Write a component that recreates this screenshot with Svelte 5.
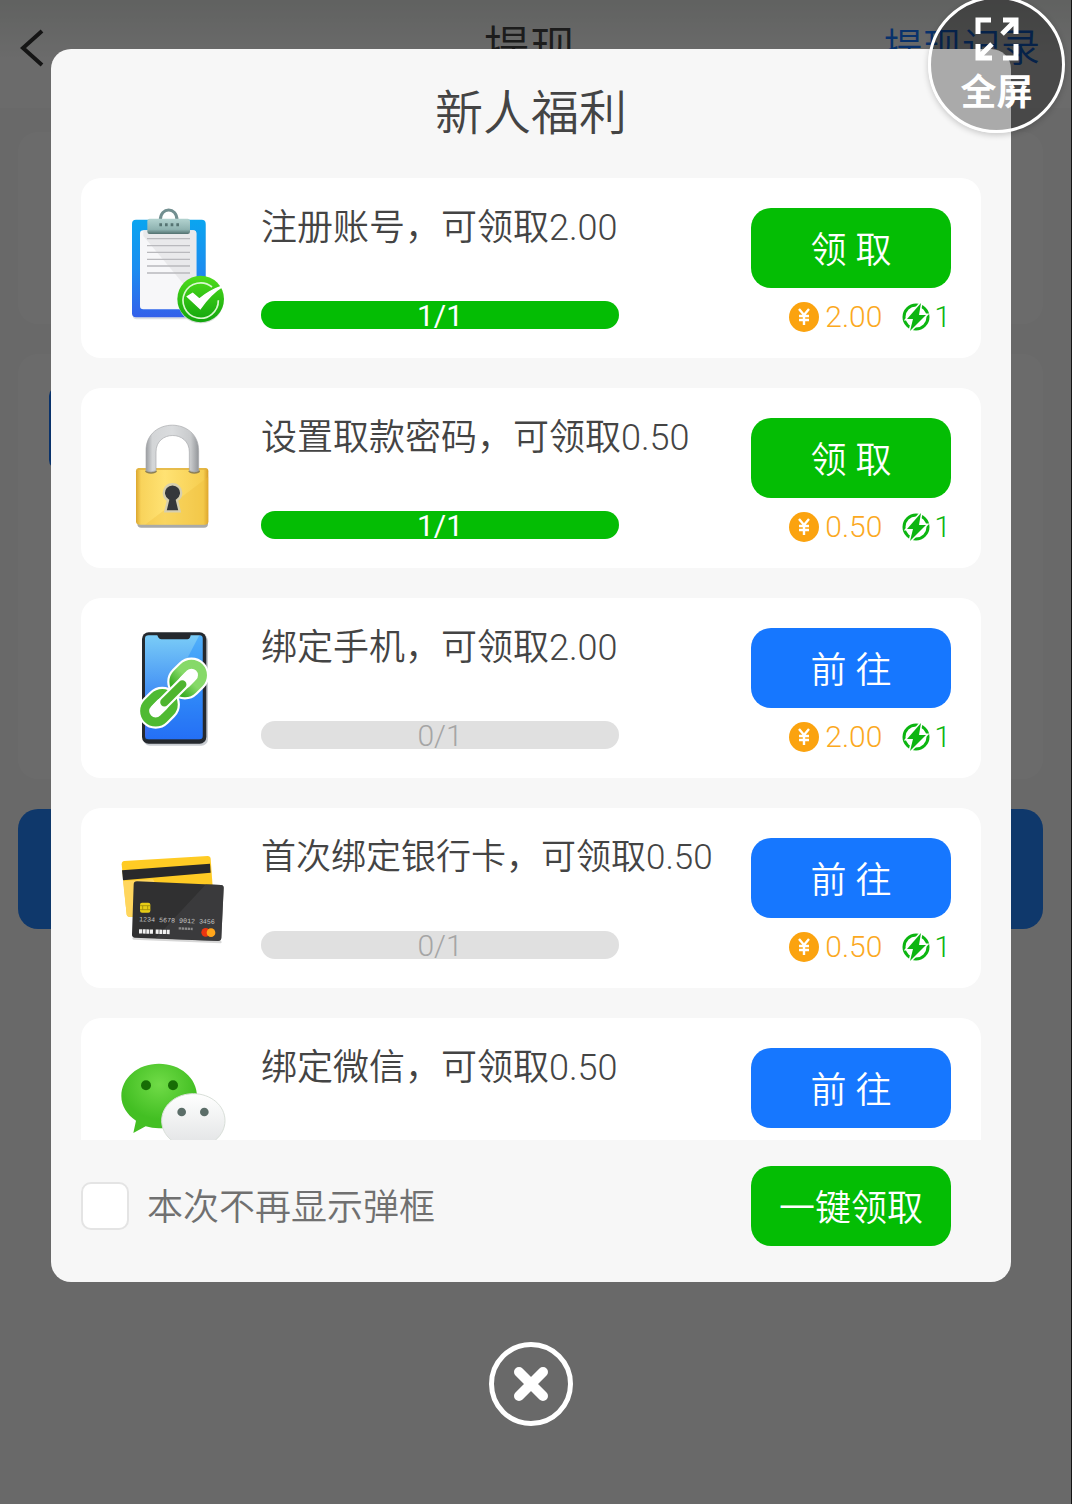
<script>
    const tasks = [
        {icon: 'clipboard', title: '注册账号，可领取', done: 1, money: '2.00'},
        {icon: 'lock', title: '设置取款密码，可领取', done: 1, money: '0.50'},
        {icon: 'phone', title: '绑定手机，可领取', done: 0, money: '2.00'},
        {icon: 'cards', title: '首次绑定银行卡，可领取', done: 0, money: '0.50'},
        {icon: 'wechat', title: '绑定微信，可领取', done: 0, money: '0.50'}
    ];

    let open = true;
    let hideNext = false;
</script>

<div class="app">
    <div class="page" inert={open}>
        <header class="nav">
            <button class="back" aria-label="返回">
                <svg viewBox="0 0 24 38"><path d="M22 2 3 19l19 17"/></svg>
            </button>
            <h1>提现</h1>
            <a href="#records">提现记录</a>
        </header>
        <section class="panel account"></section>
        <section class="panel amount"><div class="choice"></div></section>
        <button class="submit" aria-label="提现"></button>
    </div>

    {#if open}
        <div class="overlay">
            <div class="modal" role="dialog" aria-labelledby="modal-title">
                <h2 id="modal-title">新人福利</h2>

                <ul class="tasks">
                    {#each tasks as task}
                        <li>
                            {#if task.icon === 'clipboard'}
                                <svg class="pic" viewBox="93 84 360 360">
                                    <defs>
                                        <linearGradient id="board" x2="0" y2="1"><stop stop-color="#0aa5f0"/><stop offset=".5" stop-color="#1b8df0"/><stop offset="1" stop-color="#3460ea"/></linearGradient>
                                        <linearGradient id="clip" x2="0" y2="1"><stop stop-color="#b3d3d0"/><stop offset=".7" stop-color="#8fb3b1"/><stop offset="1" stop-color="#52706f"/></linearGradient>
                                        <linearGradient id="tick" x2="0" y2="1"><stop stop-color="#4fdc1c"/><stop offset="1" stop-color="#11a50d"/></linearGradient>
                                    </defs>
                                    <rect x="158" y="126" width="220" height="292" rx="12" fill="#dde0e4"/>
                                    <rect x="156" y="119" width="221" height="293" rx="12" fill="url(#board)"/>
                                    <rect x="180" y="151" width="169" height="237" rx="10" fill="#f7f7f9"/>
                                    <path d="M190 151h149q10 0 10 10v184l-34-28L190 168z" fill="#e9e9eb"/>
                                    <path d="M201 176h129M201 197h129M201 217h129M201 238h129M201 258h129M201 279h129" stroke="#b9b9bd" stroke-width="4"/>
                                    <path d="M241 120c0-40 50-40 50 0" fill="none" stroke="#728f90" stroke-width="9"/>
                                    <rect x="202" y="116" width="128" height="46" rx="7" fill="url(#clip)"/>
                                    <path d="M238 134h60" stroke="#557372" stroke-width="9" stroke-dasharray="8 9"/>
                                    <ellipse cx="362" cy="364" rx="68" ry="66" fill="#d4dcd4"/>
                                    <circle cx="362" cy="357" r="70" fill="url(#tick)"/>
                                    <path d="M396 321a53 53 0 1 0 19 40" fill="none" stroke="#d9f8ce" stroke-width="5"/>
                                    <path d="m322 350 16-10 20 17q30-26 74-41-42 26-71 70z" fill="#fff" stroke="#fff" stroke-width="4"/>
                                </svg>
                            {:else if task.icon === 'lock'}
                                <svg class="pic" viewBox="93 84 360 360">
                                    <defs>
                                        <linearGradient id="steel"><stop stop-color="#9a9da1"/><stop offset=".12" stop-color="#d3d5d7"/><stop offset=".5" stop-color="#dadcde"/><stop offset=".85" stop-color="#c8cacc"/><stop offset="1" stop-color="#929599"/></linearGradient>
                                        <linearGradient id="gold"><stop stop-color="#dca72f"/><stop offset=".07" stop-color="#f8d35b"/><stop offset=".4" stop-color="#ffe273"/><stop offset=".93" stop-color="#f6ce50"/><stop offset="1" stop-color="#d79c26"/></linearGradient>
                                    </defs>
                                    <rect x="172" y="365" width="212" height="48" rx="12" fill="#a9aaa8"/>
                                    <rect x="168" y="234" width="217" height="170" rx="10" fill="url(#gold)"/>
                                    <path d="M195 404 385 260v134q0 10-10 10z" fill="#eebe3c" opacity=".35"/>
                                    <path d="M174 237h205" stroke="#dfb040" stroke-width="4"/>
                                    <ellipse cx="213" cy="244" rx="17" ry="7" fill="#8e8054"/>
                                    <ellipse cx="343" cy="244" rx="17" ry="7" fill="#8e8054"/>
                                    <path d="M198 242v-60c0-102 158-102 158 0v60q-13 8-28 0v-56c0-66-100-66-100 0v56q-15 8-30 0z" fill="url(#steel)" stroke="#a6a8ab" stroke-width="2"/>
                                    <path d="M256 364 264 331a26 26 0 1 1 27 0l8 33z" fill="#35373b" stroke="#d7cfae" stroke-width="7"/>
                                </svg>
                            {:else if task.icon === 'phone'}
                                <svg class="pic" viewBox="93 84 360 360">
                                    <defs>
                                        <linearGradient id="screen" x2="0" y2="1"><stop stop-color="#7accf7"/><stop offset=".5" stop-color="#4795f5"/><stop offset="1" stop-color="#3468f0"/></linearGradient>
                                        <linearGradient id="link" x2="1" y2="0"><stop stop-color="#3aad25"/><stop offset=".5" stop-color="#86d968"/></linearGradient>
                                    </defs>
                                    <rect x="190" y="103" width="194" height="334" rx="20" fill="#c9cdd2"/>
                                    <rect x="186" y="97" width="193" height="334" rx="20" fill="#25292e"/>
                                    <path d="M206 106h26q4 12 12 12h78q8 0 10-12h26q10 0 10 10v292q0 10-10 10H206q-11 0-11-10V116q0-10 11-10z" fill="url(#screen)"/>
                                    <path d="M358 106q10 0 10 10v292q0 10-10 10H195z" fill="#087fff" opacity=".35"/>
                                    <g fill="#fff" transform="rotate(-45 280 280)">
                                        <g stroke="#fff" stroke-width="40">
                                            <rect x="172" y="247" width="94" height="66" rx="33"/>
                                            <rect x="296" y="247" width="94" height="66" rx="33"/>
                                        </g>
                                        <rect x="172" y="247" width="94" height="66" rx="33" stroke="#4fba32" stroke-width="27"/>
                                        <rect x="296" y="247" width="94" height="66" rx="33" stroke="url(#link)" stroke-width="27"/>
                                        <path d="M214 280h134" stroke="#fff" stroke-width="38" stroke-linecap="round"/>
                                        <path d="M242 280h76" stroke="#4eb52f" stroke-width="25" stroke-linecap="round"/>
                                    </g>
                                </svg>
                            {:else if task.icon === 'cards'}
                                <svg class="pic" viewBox="93 54 360 360">
                                    <path d="m133 123 250-15q8 0 9 8l11 155-252 20q-10 0-11-8L125 133q0-9 8-10z" fill="#ffcb24"/>
                                    <path d="m129 183 90-5 60 105-128 8q-10 0-11-8z" fill="#ffd65e"/>
                                    <path d="m126 151 264-20 2 27-263 23z" fill="#29292a"/>
                                    <path d="m161 355 260 11" stroke="#d7d7d7" stroke-width="8" stroke-linecap="round"/>
                                    <path d="m171 184 252 11q9 1 8 10l-7 149q-1 9-10 9l-250-10q-9-1-8-10l5-149q0-10 10-10z" fill="#303031"/>
                                    <path d="m378 193 45 2q9 1 8 10l-7 149q-1 9-10 9l-187-8z" fill="#414142" opacity=".65"/>
                                    <rect x="180" y="248" width="31" height="30" rx="6" fill="#e6cc17"/>
                                    <path d="M180 257h8v12h-8M211 257h-8v12h8M188 257h15M188 269h15" fill="none" stroke="#8b7b0b" stroke-width="2"/>
                                    <text x="177" y="304" class="digits" transform="rotate(2 177 304)">1234 5678 9012 3456</text>
                                    <path d="m177 334 42 1m8 0 44 1" stroke="#f1f1f1" stroke-width="13" stroke-dasharray="9 2"/>
                                    <path d="m296 325 42 2" stroke="#8c8c8c" stroke-width="7" stroke-dasharray="7 2"/>
                                    <circle cx="377" cy="337" r="13" fill="#eb3510"/>
                                    <circle cx="393" cy="338" r="13" fill="#ffa51a"/>
                                </svg>
                            {:else}
                                <svg class="pic" viewBox="93 84 360 360">
                                    <defs>
                                        <radialGradient id="green" cx=".5" cy=".3"><stop stop-color="#70db47"/><stop offset="1" stop-color="#43bf23"/></radialGradient>
                                        <linearGradient id="pale" x2="0" y2="1"><stop stop-color="#fff"/><stop offset="1" stop-color="#e1e3e4"/></linearGradient>
                                    </defs>
                                    <path d="M237 131c64 0 114 43 114 97s-50 97-114 97q-21 0-40-6l-37 20 8-37c-27-18-44-44-44-74 0-54 49-97 113-97z" fill="url(#green)"/>
                                    <circle cx="198" cy="196" r="15" fill="#176d05"/>
                                    <circle cx="279" cy="196" r="15" fill="#176d05"/>
                                    <path d="M340 221c53 0 95 36 95 81s-42 81-95 81-95-36-95-81 42-81 95-81z" fill="url(#pale)" stroke="#d9dfd9" stroke-width="3"/>
                                    <circle cx="305" cy="276" r="13" fill="#5b6d68"/>
                                    <circle cx="373" cy="276" r="13" fill="#5b6d68"/>
                                </svg>
                            {/if}

                            <div class="info">
                                <h3 class:long={task.title.length > 10}>{task.title}{task.money}</h3>
                                <div class="bar" class:full={task.done}
                                     role="progressbar" aria-label={task.title}
                                     aria-valuenow={task.done} aria-valuemin="0" aria-valuemax="1">
                                    {task.done}/1
                                </div>
                            </div>

                            <div class="side">
                                <button class="btn" class:green={task.done}>{task.done ? '领 取' : '前 往'}</button>
                                <div class="reward">
                                    <svg class="coin" viewBox="0 0 30 30">
                                        <circle cx="15" cy="15" r="15" fill="#fba30f"/>
                                        <path d="m10 7 5 6 5-6M10 14h10M10 18h10M15 13v10" fill="none" stroke="#fff" stroke-width="2.4"/>
                                    </svg>
                                    <span class="money">{task.money}</span>
                                    <svg class="bolt" viewBox="0 0 28 28">
                                        <circle cx="14" cy="14" r="12" fill="none" stroke="#0cb511" stroke-width="3"/>
                                        <path d="M19 0 5 16h6L8 28l16-16h-7z" fill="#0cb511" stroke="#fff" stroke-width="3" paint-order="stroke"/>
                                    </svg>
                                    <span class="power">1</span>
                                </div>
                            </div>
                        </li>
                    {/each}
                </ul>

                <footer>
                    <input type="checkbox" id="hide-next" bind:checked={hideNext}>
                    <label for="hide-next">本次不再显示弹框</label>
                    <button class="btn green">一键领取</button>
                </footer>
            </div>

            <button class="close" aria-label="关闭" on:click={() => (open = false)}>
                <svg viewBox="0 0 84 84">
                    <circle cx="42" cy="42" r="39.5" stroke-width="5"/>
                    <path d="m30 30 24 24M54 30 30 54" stroke-width="10"/>
                </svg>
            </button>
        </div>
    {/if}

    <button class="fullscreen">
        <svg viewBox="0 0 44 44">
            <path d="M16 3H3v14M28 3h13v14M40 4 27 17M3 27v14h14M4 40l13-13M41 27v14H28"/>
        </svg>
        全屏
    </button>
</div>


<style>

    :global(body) {
        margin: 0;
    }

    .app {
        position: relative;
        min-height: 100vh;
        overflow: hidden;
        box-sizing: border-box;
        border-right: 1px solid #151515;
        background: #fafafa;
        font-family: Roboto, "Noto Sans CJK SC", sans-serif;
        font-weight: 350;
        color: #444;
    }

    h1, h2, h3, ul {
        margin: 0;
        padding: 0;
        font-weight: 350;
    }

    button {
        padding: 0;
        border: 0;
        font: inherit;
        cursor: pointer;
    }

    svg {
        display: block;
    }

    .page {
        padding: 0 28px 0 18px;
    }

    .nav {
        display: grid;
        grid-template-columns: 1fr auto 1fr;
        align-items: center;
        height: 92px;
        margin: 0 -28px 0 -18px;
        padding: 2px 31px 14px 20px;
        background: linear-gradient(#e6e9e6, #fff 60px);
    }

    .nav h1 {
        font-size: 46px;
        line-height: 76px;
    }

    .nav a {
        justify-self: end;
        color: #1677ff;
        font-size: 39px;
        line-height: 76px;
        text-decoration: none;
    }

    .back {
        width: 24px;
        background: none;
    }

    .back path {
        fill: none;
        stroke: #333;
        stroke-width: 4;
    }

    .panel {
        border-radius: 20px;
        background: #fff;
    }

    .account {
        height: 192px;
        margin-top: 24px;
    }

    .amount {
        height: 393px;
        margin-top: 30px;
        padding: 32px 31px 0;
    }

    .choice {
        width: 30%;
        height: 84px;
        border-radius: 10px;
        background: #1677ff;
    }

    .submit {
        width: 100%;
        height: 120px;
        margin-top: 30px;
        border-radius: 20px;
        background: #2585ff;
    }

    .overlay {
        position: absolute;
        inset: 0;
        display: flex;
        flex-direction: column;
        align-items: center;
        padding: 49px 60px 0 51px;
        background: rgba(0, 0, 0, .58);
    }

    .modal {
        display: flex;
        flex-direction: column;
        width: 100%;
        height: 82vh;
        border-radius: 20px;
        background: #f7f7f7;
    }

    .modal h2 {
        height: 129px;
        font-size: 48px;
        line-height: 130px;
        text-align: center;
    }

    .tasks {
        display: flex;
        flex: 1;
        flex-direction: column;
        gap: 30px;
        min-height: 0;
        padding: 0 30px;
        overflow: hidden;
        list-style: none;
    }

    .tasks li {
        display: grid;
        flex: none;
        grid-template-columns: 120px 1fr 200px;
        gap: 30px;
        padding: 30px 30px 24px;
        border-radius: 20px;
        background: #fff;
    }

    .pic {
        width: 120px;
        height: 120px;
    }

    .digits {
        fill: #c9c9c9;
        font-family: "Liberation Mono", monospace;
        font-size: 20px;
    }

    .info {
        min-width: 0;
    }

    .info h3 {
        font-size: 36px;
        line-height: 40px;
        white-space: nowrap;
    }

    .info h3.long {
        font-size: 35px;
    }

    .bar {
        width: 358px;
        max-width: 100%;
        height: 28px;
        margin-top: 53px;
        border-radius: 14px;
        background: #e0e0e0;
        color: #a5a5a5;
        font-size: 30px;
        line-height: 30px;
        text-align: center;
    }

    .bar.full {
        background: #04bd04;
        color: #fff;
        font-weight: 400;
    }

    .btn {
        width: 200px;
        height: 80px;
        padding-bottom: 3px;
        border-radius: 20px;
        background: #1677ff;
        color: #fff;
        font-size: 36px;
    }

    .btn.green {
        background: #04bd04;
    }

    .side {
        display: flex;
        flex-direction: column;
    }

    .reward {
        display: flex;
        align-items: center;
        justify-content: flex-end;
        height: 34px;
        margin-top: 12px;
        font-size: 30px;
        line-height: 34px;
    }

    .coin {
        width: 30px;
        height: 30px;
        margin-right: 6px;
    }

    .bolt {
        width: 28px;
        height: 28px;
        margin: 0 4px 0 20px;
    }

    .money {
        color: #fba91f;
    }

    .power {
        color: #0cb511;
    }

    footer {
        display: flex;
        align-items: center;
        padding: 26px 60px 36px 30px;
    }

    footer input {
        width: 48px;
        height: 48px;
        margin: 0 18px 0 0;
        box-sizing: border-box;
        border: 2px solid #e4e4e4;
        border-radius: 10px;
        background: #fff;
        appearance: none;
    }

    footer input:checked {
        background: #04bd04;
    }

    footer label {
        flex: 1;
        padding-top: 4px;
        color: #707070;
        font-size: 36px;
        line-height: 48px;
    }

    .close {
        width: 84px;
        height: 84px;
        margin-top: 60px;
        background: none;
    }

    .close svg {
        fill: none;
        stroke: #fff;
        stroke-linecap: round;
    }

    .fullscreen {
        position: absolute;
        top: -4px;
        right: 6px;
        display: flex;
        flex-direction: column;
        align-items: center;
        width: 137px;
        height: 137px;
        padding-top: 18px;
        box-sizing: border-box;
        border: 3px solid #fff;
        border-radius: 50%;
        background: rgba(0, 0, 0, .31);
        box-shadow: 0 2px 6px rgba(0, 0, 0, .2);
        color: #fff;
        font-size: 36px;
        font-weight: 700;
        line-height: 64px;
    }

    .fullscreen svg {
        flex: none;
        width: 44px;
        height: 44px;
        fill: none;
        stroke: #fff;
        stroke-width: 5;
    }
</style>
